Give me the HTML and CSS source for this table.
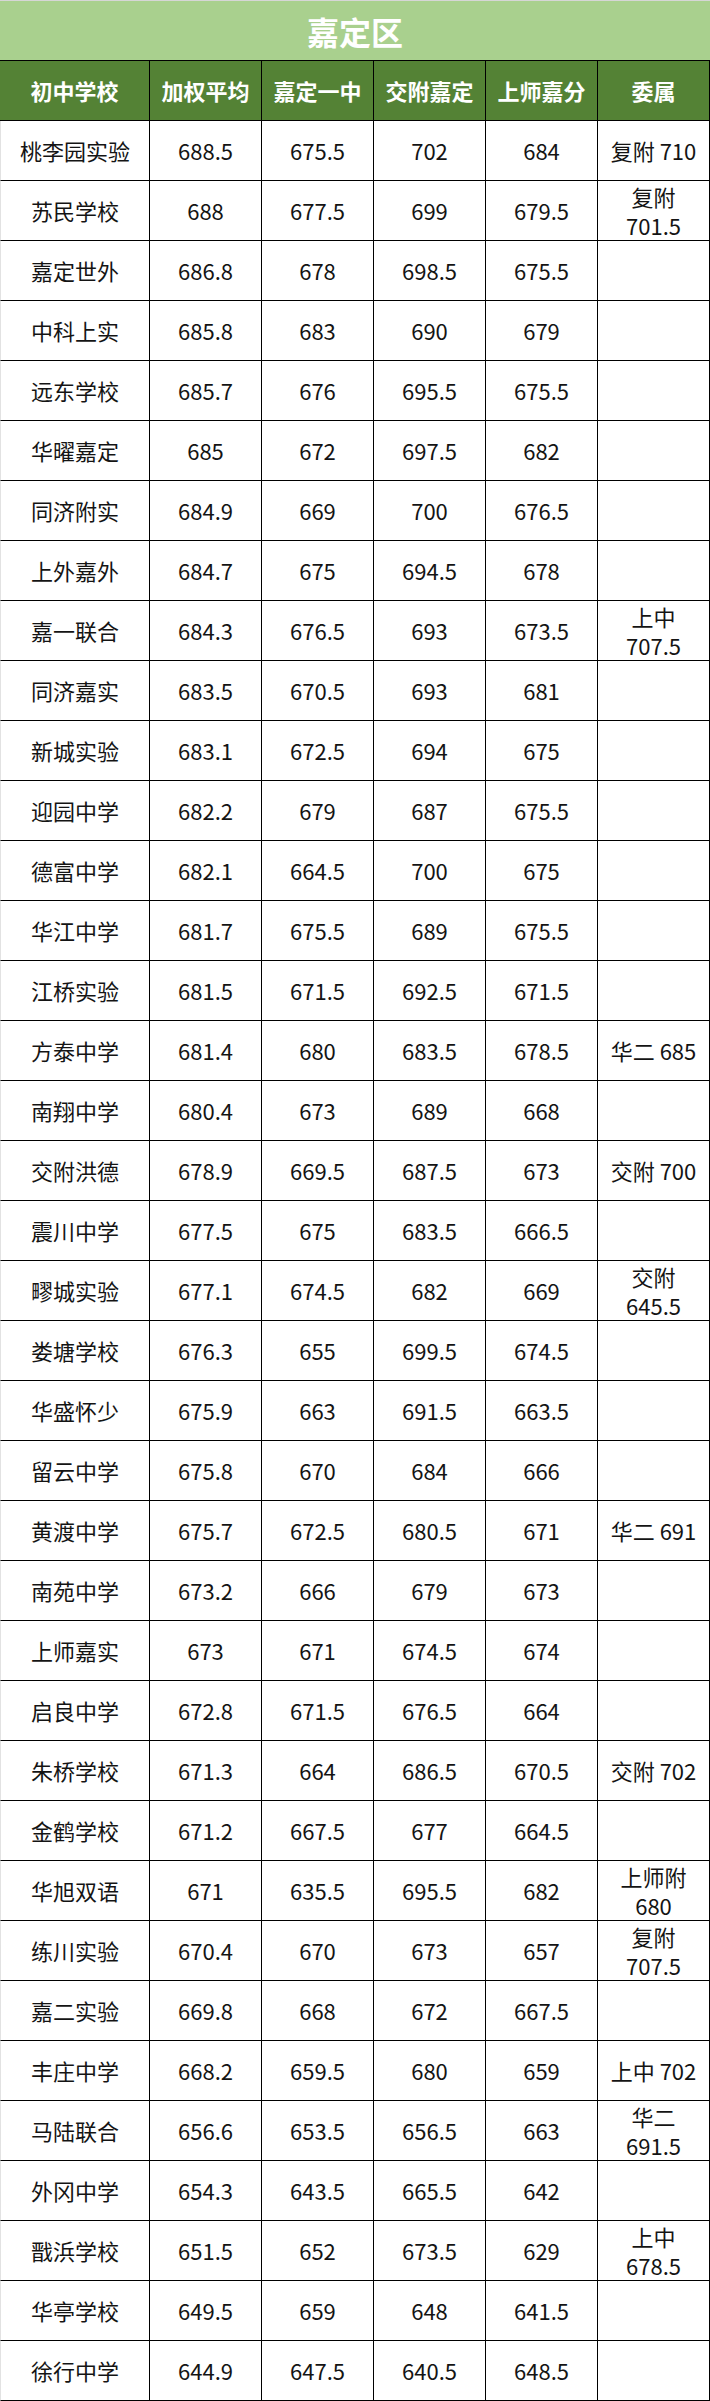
FILE: index.html
```html
<!DOCTYPE html>
<html lang="zh-CN">
<head>
<meta charset="utf-8">
<title>嘉定区</title>
<link rel="stylesheet" href="styles.css">
</head>
<body>
<div class="sheet">
  <div class="title">嘉定区</div>
  <div class="grid">
    <div class="cell head">初中学校</div><div class="cell head">加权平均</div><div class="cell head">嘉定一中</div><div class="cell head">交附嘉定</div><div class="cell head">上师嘉分</div><div class="cell head">委属</div>

    <div class="cell name">桃李园实验</div><div class="cell">688.5</div><div class="cell">675.5</div><div class="cell">702</div><div class="cell">684</div><div class="cell">复附 710</div>
    <div class="cell name">苏民学校</div><div class="cell">688</div><div class="cell">677.5</div><div class="cell">699</div><div class="cell">679.5</div><div class="cell">复附 701.5</div>
    <div class="cell name">嘉定世外</div><div class="cell">686.8</div><div class="cell">678</div><div class="cell">698.5</div><div class="cell">675.5</div><div class="cell"></div>
    <div class="cell name">中科上实</div><div class="cell">685.8</div><div class="cell">683</div><div class="cell">690</div><div class="cell">679</div><div class="cell"></div>
    <div class="cell name">远东学校</div><div class="cell">685.7</div><div class="cell">676</div><div class="cell">695.5</div><div class="cell">675.5</div><div class="cell"></div>
    <div class="cell name">华曜嘉定</div><div class="cell">685</div><div class="cell">672</div><div class="cell">697.5</div><div class="cell">682</div><div class="cell"></div>
    <div class="cell name">同济附实</div><div class="cell">684.9</div><div class="cell">669</div><div class="cell">700</div><div class="cell">676.5</div><div class="cell"></div>
    <div class="cell name">上外嘉外</div><div class="cell">684.7</div><div class="cell">675</div><div class="cell">694.5</div><div class="cell">678</div><div class="cell"></div>
    <div class="cell name">嘉一联合</div><div class="cell">684.3</div><div class="cell">676.5</div><div class="cell">693</div><div class="cell">673.5</div><div class="cell">上中 707.5</div>
    <div class="cell name">同济嘉实</div><div class="cell">683.5</div><div class="cell">670.5</div><div class="cell">693</div><div class="cell">681</div><div class="cell"></div>
    <div class="cell name">新城实验</div><div class="cell">683.1</div><div class="cell">672.5</div><div class="cell">694</div><div class="cell">675</div><div class="cell"></div>
    <div class="cell name">迎园中学</div><div class="cell">682.2</div><div class="cell">679</div><div class="cell">687</div><div class="cell">675.5</div><div class="cell"></div>
    <div class="cell name">德富中学</div><div class="cell">682.1</div><div class="cell">664.5</div><div class="cell">700</div><div class="cell">675</div><div class="cell"></div>
    <div class="cell name">华江中学</div><div class="cell">681.7</div><div class="cell">675.5</div><div class="cell">689</div><div class="cell">675.5</div><div class="cell"></div>
    <div class="cell name">江桥实验</div><div class="cell">681.5</div><div class="cell">671.5</div><div class="cell">692.5</div><div class="cell">671.5</div><div class="cell"></div>
    <div class="cell name">方泰中学</div><div class="cell">681.4</div><div class="cell">680</div><div class="cell">683.5</div><div class="cell">678.5</div><div class="cell">华二 685</div>
    <div class="cell name">南翔中学</div><div class="cell">680.4</div><div class="cell">673</div><div class="cell">689</div><div class="cell">668</div><div class="cell"></div>
    <div class="cell name">交附洪德</div><div class="cell">678.9</div><div class="cell">669.5</div><div class="cell">687.5</div><div class="cell">673</div><div class="cell">交附 700</div>
    <div class="cell name">震川中学</div><div class="cell">677.5</div><div class="cell">675</div><div class="cell">683.5</div><div class="cell">666.5</div><div class="cell"></div>
    <div class="cell name">疁城实验</div><div class="cell">677.1</div><div class="cell">674.5</div><div class="cell">682</div><div class="cell">669</div><div class="cell">交附 645.5</div>
    <div class="cell name">娄塘学校</div><div class="cell">676.3</div><div class="cell">655</div><div class="cell">699.5</div><div class="cell">674.5</div><div class="cell"></div>
    <div class="cell name">华盛怀少</div><div class="cell">675.9</div><div class="cell">663</div><div class="cell">691.5</div><div class="cell">663.5</div><div class="cell"></div>
    <div class="cell name">留云中学</div><div class="cell">675.8</div><div class="cell">670</div><div class="cell">684</div><div class="cell">666</div><div class="cell"></div>
    <div class="cell name">黄渡中学</div><div class="cell">675.7</div><div class="cell">672.5</div><div class="cell">680.5</div><div class="cell">671</div><div class="cell">华二 691</div>
    <div class="cell name">南苑中学</div><div class="cell">673.2</div><div class="cell">666</div><div class="cell">679</div><div class="cell">673</div><div class="cell"></div>
    <div class="cell name">上师嘉实</div><div class="cell">673</div><div class="cell">671</div><div class="cell">674.5</div><div class="cell">674</div><div class="cell"></div>
    <div class="cell name">启良中学</div><div class="cell">672.8</div><div class="cell">671.5</div><div class="cell">676.5</div><div class="cell">664</div><div class="cell"></div>
    <div class="cell name">朱桥学校</div><div class="cell">671.3</div><div class="cell">664</div><div class="cell">686.5</div><div class="cell">670.5</div><div class="cell">交附 702</div>
    <div class="cell name">金鹤学校</div><div class="cell">671.2</div><div class="cell">667.5</div><div class="cell">677</div><div class="cell">664.5</div><div class="cell"></div>
    <div class="cell name">华旭双语</div><div class="cell">671</div><div class="cell">635.5</div><div class="cell">695.5</div><div class="cell">682</div><div class="cell">上师附 680</div>
    <div class="cell name">练川实验</div><div class="cell">670.4</div><div class="cell">670</div><div class="cell">673</div><div class="cell">657</div><div class="cell">复附 707.5</div>
    <div class="cell name">嘉二实验</div><div class="cell">669.8</div><div class="cell">668</div><div class="cell">672</div><div class="cell">667.5</div><div class="cell"></div>
    <div class="cell name">丰庄中学</div><div class="cell">668.2</div><div class="cell">659.5</div><div class="cell">680</div><div class="cell">659</div><div class="cell">上中 702</div>
    <div class="cell name">马陆联合</div><div class="cell">656.6</div><div class="cell">653.5</div><div class="cell">656.5</div><div class="cell">663</div><div class="cell">华二 691.5</div>
    <div class="cell name">外冈中学</div><div class="cell">654.3</div><div class="cell">643.5</div><div class="cell">665.5</div><div class="cell">642</div><div class="cell"></div>
    <div class="cell name">戬浜学校</div><div class="cell">651.5</div><div class="cell">652</div><div class="cell">673.5</div><div class="cell">629</div><div class="cell">上中 678.5</div>
    <div class="cell name">华亭学校</div><div class="cell">649.5</div><div class="cell">659</div><div class="cell">648</div><div class="cell">641.5</div><div class="cell"></div>
    <div class="cell name">徐行中学</div><div class="cell">644.9</div><div class="cell">647.5</div><div class="cell">640.5</div><div class="cell">648.5</div><div class="cell"></div>
  </div>
</div>
</body>
</html>
```

FILE: styles.css
```css
html, body {
  margin: 0;
  padding: 0;
  background: #ffffff;
}

.sheet {
  width: 710px;
  font-family: "Noto Sans CJK SC", "Noto Sans", sans-serif;
}

.title {
  box-sizing: border-box;
  height: 61px;
  border-top: 1px solid #d6d6d6;
  border-bottom: 1px solid #000000;
  background: #a9d08e;
  color: #ffffff;
  font-size: 32px;
  font-weight: 700;
  display: flex;
  align-items: center;
  justify-content: center;
}

.grid {
  display: grid;
  grid-template-columns: 150px repeat(5, 112px);
  grid-auto-rows: 60px;
}

.cell {
  box-sizing: border-box;
  border-right: 1px solid #000000;
  border-bottom: 1px solid #000000;
  display: flex;
  align-items: center;
  justify-content: center;
  text-align: center;
  padding: 0 6px;
  font-size: 22px;
  line-height: 29px;
  color: #141414;
}

.cell.name {
  border-left: 1px solid #e2e2e2;
}

.cell.head {
  background: #548235;
  color: #ffffff;
  font-weight: 700;
}
```
